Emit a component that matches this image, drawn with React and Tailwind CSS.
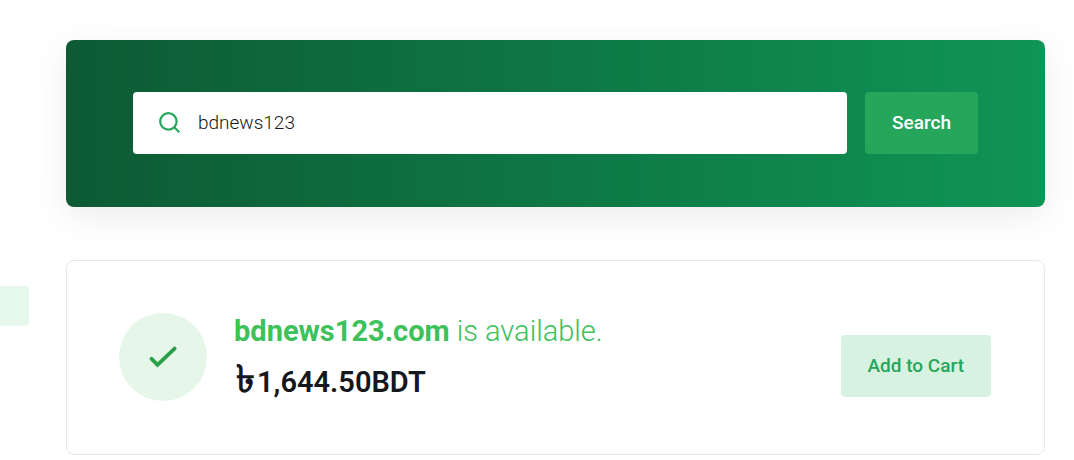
function SearchIcon() {
  return (
    <svg className="size-6 shrink-0" viewBox="0 0 24 24" fill="none" stroke="#26a65b" strokeWidth="2.2" aria-hidden="true">
      <circle cx="11.4" cy="10.4" r="8.2" />
      <path d="M17 16 22.3 21.3" />
    </svg>
  );
}

function CheckIcon() {
  return (
    <svg className="h-6 w-7" viewBox="0 0 28 24" fill="none" stroke="#2b9f48" strokeWidth="3.8" strokeLinecap="round" aria-hidden="true">
      <path d="M2.6 13.8 8.5 19.8 25.6 3.6" strokeLinejoin="miter" />
    </svg>
  );
}

function SearchPanel() {
  return (
    <form
      onSubmit={(event) => event.preventDefault()}
      className="flex gap-[18px] rounded-lg bg-linear-to-r from-[#0d5a34] via-[#0e7d48] via-60% to-[#109556] px-[67px] pt-[52px] pb-[53px] shadow-[0_9px_36px_rgba(0,0,0,0.08)]"
    >
      <label className="flex h-[62px] min-w-0 flex-1 items-center gap-[17px] rounded bg-white px-6">
        <SearchIcon />
        <input
          type="text"
          aria-label="Domain name"
          defaultValue="bdnews123"
          className="min-w-0 flex-1 bg-transparent text-[19px] font-light text-[#15171c] outline-none"
        />
      </label>
      <button type="submit" className="h-[62px] rounded bg-[#26a65b] px-[27px] text-[19px] font-medium text-white">
        Search
      </button>
    </form>
  );
}

function ResultCard() {
  return (
    <section className="flex items-start rounded-lg border border-[#e8e8e8] px-[53px] py-[52px]">
      <div className="-ml-px flex size-[88px] shrink-0 items-center justify-center rounded-full bg-[#e6f7ea]">
        <CheckIcon />
      </div>
      <div className="ml-[27px] flex-1 text-[29px]">
        <h2 className="mb-[15px] leading-9 font-light text-[#3cc15b]">
          <strong className="font-bold">bdnews123.com</strong> is available.
        </h2>
        <p className="h-[38px] leading-9 font-semibold text-[#15171c]">
          <span className="px-0.5 text-[38px] leading-0">৳</span>1,644.50BDT
        </p>
      </div>
      <button type="button" className="mt-[22px] h-[62px] rounded bg-[#d8f2e1] px-[27px] text-[19px] font-medium text-[#26a65b]">
        Add to Cart
      </button>
    </section>
  );
}

export default function App() {
  return (
    <div className="flex bg-white font-[Roboto,'Noto_Sans',sans-serif]">
      <aside className="w-[29px] shrink-0 pt-[286px]">
        <div className="h-10 rounded-r bg-[#e6f8ec]" />
      </aside>
      <main className="ml-[37px] mr-[29px] flex min-w-0 flex-1 flex-col gap-[53px] pt-10 pb-[5px]">
        <SearchPanel />
        <ResultCard />
      </main>
    </div>
  );
}
